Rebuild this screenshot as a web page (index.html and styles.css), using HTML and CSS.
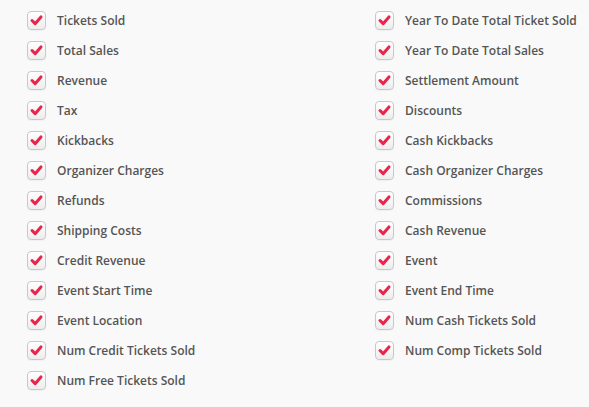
FILE: index.html
```html
<!DOCTYPE html>
<html>
<head>
<meta charset="utf-8">
<link rel="stylesheet" href="styles.css">
</head>
<body>
<div class="grid">
  <div class="col">
    <label class="item"><span class="box"><svg viewBox="0 0 19 19"><path d="M4.5 9.5 L8 13 L14.5 5.5" /></svg></span>Tickets Sold</label>
    <label class="item"><span class="box"><svg viewBox="0 0 19 19"><path d="M4.5 9.5 L8 13 L14.5 5.5" /></svg></span>Total Sales</label>
    <label class="item"><span class="box"><svg viewBox="0 0 19 19"><path d="M4.5 9.5 L8 13 L14.5 5.5" /></svg></span>Revenue</label>
    <label class="item"><span class="box"><svg viewBox="0 0 19 19"><path d="M4.5 9.5 L8 13 L14.5 5.5" /></svg></span>Tax</label>
    <label class="item"><span class="box"><svg viewBox="0 0 19 19"><path d="M4.5 9.5 L8 13 L14.5 5.5" /></svg></span>Kickbacks</label>
    <label class="item"><span class="box"><svg viewBox="0 0 19 19"><path d="M4.5 9.5 L8 13 L14.5 5.5" /></svg></span>Organizer Charges</label>
    <label class="item"><span class="box"><svg viewBox="0 0 19 19"><path d="M4.5 9.5 L8 13 L14.5 5.5" /></svg></span>Refunds</label>
    <label class="item"><span class="box"><svg viewBox="0 0 19 19"><path d="M4.5 9.5 L8 13 L14.5 5.5" /></svg></span>Shipping Costs</label>
    <label class="item"><span class="box"><svg viewBox="0 0 19 19"><path d="M4.5 9.5 L8 13 L14.5 5.5" /></svg></span>Credit Revenue</label>
    <label class="item"><span class="box"><svg viewBox="0 0 19 19"><path d="M4.5 9.5 L8 13 L14.5 5.5" /></svg></span>Event Start Time</label>
    <label class="item"><span class="box"><svg viewBox="0 0 19 19"><path d="M4.5 9.5 L8 13 L14.5 5.5" /></svg></span>Event Location</label>
    <label class="item"><span class="box"><svg viewBox="0 0 19 19"><path d="M4.5 9.5 L8 13 L14.5 5.5" /></svg></span>Num Credit Tickets Sold</label>
    <label class="item"><span class="box"><svg viewBox="0 0 19 19"><path d="M4.5 9.5 L8 13 L14.5 5.5" /></svg></span>Num Free Tickets Sold</label>
  </div>
  <div class="col">
    <label class="item"><span class="box"><svg viewBox="0 0 19 19"><path d="M4.5 9.5 L8 13 L14.5 5.5" /></svg></span>Year To Date Total Ticket Sold</label>
    <label class="item"><span class="box"><svg viewBox="0 0 19 19"><path d="M4.5 9.5 L8 13 L14.5 5.5" /></svg></span>Year To Date Total Sales</label>
    <label class="item"><span class="box"><svg viewBox="0 0 19 19"><path d="M4.5 9.5 L8 13 L14.5 5.5" /></svg></span>Settlement Amount</label>
    <label class="item"><span class="box"><svg viewBox="0 0 19 19"><path d="M4.5 9.5 L8 13 L14.5 5.5" /></svg></span>Discounts</label>
    <label class="item"><span class="box"><svg viewBox="0 0 19 19"><path d="M4.5 9.5 L8 13 L14.5 5.5" /></svg></span>Cash Kickbacks</label>
    <label class="item"><span class="box"><svg viewBox="0 0 19 19"><path d="M4.5 9.5 L8 13 L14.5 5.5" /></svg></span>Cash Organizer Charges</label>
    <label class="item"><span class="box"><svg viewBox="0 0 19 19"><path d="M4.5 9.5 L8 13 L14.5 5.5" /></svg></span>Commissions</label>
    <label class="item"><span class="box"><svg viewBox="0 0 19 19"><path d="M4.5 9.5 L8 13 L14.5 5.5" /></svg></span>Cash Revenue</label>
    <label class="item"><span class="box"><svg viewBox="0 0 19 19"><path d="M4.5 9.5 L8 13 L14.5 5.5" /></svg></span>Event</label>
    <label class="item"><span class="box"><svg viewBox="0 0 19 19"><path d="M4.5 9.5 L8 13 L14.5 5.5" /></svg></span>Event End Time</label>
    <label class="item"><span class="box"><svg viewBox="0 0 19 19"><path d="M4.5 9.5 L8 13 L14.5 5.5" /></svg></span>Num Cash Tickets Sold</label>
    <label class="item"><span class="box"><svg viewBox="0 0 19 19"><path d="M4.5 9.5 L8 13 L14.5 5.5" /></svg></span>Num Comp Tickets Sold</label>
  </div>
</div>
</body>
</html>
```

FILE: styles.css
```css
html, body {
  margin: 0;
  padding: 0;
  background: #f9f9f9;
}
body {
  font-family: "Open Sans", "Liberation Sans", sans-serif;
  font-weight: 600;
  font-size: 12px;
  color: #555;
}
.grid {
  display: grid;
  grid-template-columns: 348px 1fr;
  padding: 5px 0 0 27px;
}
.col {
  display: flex;
  flex-direction: column;
}
.item {
  display: flex;
  align-items: center;
  height: 30px;
  gap: 11px;
}
.box {
  width: 17px;
  height: 17px;
  border: 1px solid #c8c8c8;
  border-radius: 4px;
  background: linear-gradient(#ffffff, #ededed);
  box-shadow: 0 1px 1px rgba(0, 0, 0, 0.04);
  display: flex;
  align-items: center;
  justify-content: center;
  flex: none;
}
.box svg {
  width: 19px;
  height: 19px;
}
.box path {
  fill: none;
  stroke: #e8264c;
  stroke-width: 3.4;
  stroke-linecap: round;
  stroke-linejoin: round;
}
```
